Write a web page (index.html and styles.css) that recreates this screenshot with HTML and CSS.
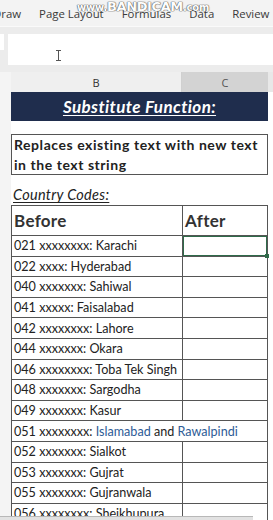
FILE: index.html
```html
<!DOCTYPE html>
<html>
<head>
<meta charset="utf-8">
<link rel="stylesheet" href="styles.css">
</head>
<body>
<div class="ribbon">
  <span class="tab tab-first">Draw</span>
  <span class="tab">Page Layout</span>
  <span class="tab">Formulas</span>
  <span class="tab">Data</span>
  <span class="tab">Review</span>
  <div class="watermark"><span class="wm-small">www.</span>BANDICAM<span class="wm-small">.com</span></div>
</div>
<div class="fbar">
  <div class="namebox"></div>
  <div class="finput">
    <svg class="ibeam" width="7" height="11" viewBox="0 0 7 11"><path d="M1 0.5h5M1 10.5h5M3.5 0.5v10" stroke="#555" stroke-width="1" fill="none"/></svg>
  </div>
</div>
<div class="sheet">
  <div class="rowhead"></div>
  <div class="main">
    <div class="colheads">
      <div class="colhead colB">B</div>
      <div class="colhead colC">C</div>
    </div>
    <div class="title"><span>Substitute Function:</span></div>
    <div class="desc">Replaces existing text with new text<br>in the text string</div>
    <div class="subhead"><span>Country Codes:</span></div>
    <div class="table">
      <div class="row head"><div class="cb">Before</div><div class="cc">After</div></div>
      <div class="row"><div class="cb">021 xxxxxxxx: Karachi</div><div class="cc sel"><span class="handle"></span></div></div>
      <div class="row"><div class="cb">022 xxxx: Hyderabad</div><div class="cc"></div></div>
      <div class="row"><div class="cb">040 xxxxxxx: Sahiwal</div><div class="cc"></div></div>
      <div class="row"><div class="cb">041 xxxxx: Faisalabad</div><div class="cc"></div></div>
      <div class="row"><div class="cb">042 xxxxxxxx: Lahore</div><div class="cc"></div></div>
      <div class="row"><div class="cb">044 xxxxxxx: Okara</div><div class="cc"></div></div>
      <div class="row"><div class="cb">046 xxxxxxxx: Toba Tek Singh</div><div class="cc"></div></div>
      <div class="row"><div class="cb">048 xxxxxxx: Sargodha</div><div class="cc"></div></div>
      <div class="row"><div class="cb">049 xxxxxxx: Kasur</div><div class="cc"></div></div>
      <div class="row span"><div class="cfull">051 xxxxxxxx: <span class="blue">Islamabad</span> and <span class="blue">Rawalpindi</span></div></div>
      <div class="row"><div class="cb">052 xxxxxxx: Sialkot</div><div class="cc"></div></div>
      <div class="row"><div class="cb">053 xxxxxxx: Gujrat</div><div class="cc"></div></div>
      <div class="row"><div class="cb">055 xxxxxxx: Gujranwala</div><div class="cc"></div></div>
      <div class="row"><div class="cb">056 xxxxxxxx: Sheikhupura</div><div class="cc"></div></div>
    </div>
  </div>
  <div class="rightpad"></div>
</div>
<div class="scrollbar"></div>
</body>
</html>
```
FILE: styles.css
```css
* { box-sizing: border-box; }
html, body { margin: 0; padding: 0; }
body {
  width: 273px;
  height: 520px;
  overflow: hidden;
  background: #ffffff;
  font-family: "Lato", "Open Sans", sans-serif;
  position: relative;
}
.ribbon {
  height: 27px;
  background: #f3f3f3;
  display: flex;
  align-items: center;
  gap: 18px;
  font-family: "Open Sans", "Noto Sans", sans-serif;
  font-size: 11.4px;
  color: #3a3a3a;
  white-space: nowrap;
  position: relative;
  border-bottom: 1px solid #fafafa;
}
.tab-first { margin-left: -7px; }
.watermark {
  position: absolute;
  left: 77px;
  top: 0px;
  font-family: "DejaVu Sans", sans-serif;
  font-weight: bold;
  font-size: 13px;
  line-height: 14px;
  letter-spacing: -0.4px;
  color: #ffffff;
  text-shadow: 0 0 1px #444, 0 0 1px #444, 0 0 1px #444;
  opacity: 0.9;
}
.wm-small { font-size: 10px; letter-spacing: -0.2px; }
.fbar {
  height: 45px;
  background: #ececec;
  display: flex;
  padding-top: 7px;
  gap: 4px;
}
.namebox {
  width: 4px;
  height: 16px;
  background: #ffffff;
}
.finput {
  flex: 1;
  height: 31px;
  background: #ffffff;
  display: flex;
  align-items: flex-end;
  padding: 0 0 4px 47px;
}
.sheet {
  display: flex;
  background: #ffffff;
}
.rowhead {
  width: 11px;
  background: #f4f4f4;
}
.main { width: 257px; }
.rightpad { flex: 1; background: linear-gradient(#e8e8e8 0 20px, #ffffff 20px); }
.colheads {
  display: flex;
  height: 20px;
  font-family: "Open Sans", sans-serif;
  font-size: 11px;
  color: #333;
}
.colhead {
  display: flex;
  align-items: center;
  justify-content: center;
}
.colB { width: 171px; background: #efefef; border-right: 1px solid #d0d0d0; }
.colC { flex: 1; background: #d3d3d3; color: #555; }
.title {
  height: 29px;
  background: #1f2d4d;
  color: #ffffff;
  font-weight: bold;
  font-style: italic;
  font-size: 17px;
  letter-spacing: 0.4px;
  display: flex;
  align-items: center;
  justify-content: center;
}
.title span { text-decoration: underline; text-underline-offset: 2px; text-decoration-thickness: 1px; }
.desc {
  margin-top: 13px;
  height: 41px;
  border: 1px solid #555;
  font-weight: bold;
  font-size: 14px;
  letter-spacing: 0.55px;
  line-height: 20px;
  padding: 0 0 0 2px;
  color: #222;
  white-space: nowrap;
}
.subhead {
  height: 30px;
  padding: 12px 0 0 2px;
  font-style: italic;
  font-size: 14.5px;
  letter-spacing: 0.3px;
  line-height: 16px;
  color: #222;
}
.subhead span { text-decoration: underline; text-underline-offset: 2px; text-decoration-thickness: 1px; }
.table {
  border-top: 1px solid #555;
  border-left: 1px solid #555;
  border-right: 1px solid #555;
}
.row {
  display: flex;
  height: 20.6px;
  border-bottom: 1px solid #555;
  font-size: 12.6px;
  color: #222;
}
.row.head { height: 30px; font-size: 17px; font-weight: bold; letter-spacing: 0.3px; color: #333; }
.cb {
  width: 171px;
  border-right: 1px solid #555;
  padding-left: 2px;
  display: flex;
  align-items: center;
  white-space: nowrap;
}
.cc {
  flex: 1;
  padding-left: 2px;
  display: flex;
  align-items: center;
  position: relative;
}
.cfull {
  padding-left: 2px;
  display: flex;
  align-items: center;
  white-space: pre;
}
.blue { color: #2d5b96; }
.sel { outline: 1.5px solid #2f6b4a; outline-offset: -1px; }
.handle {
  position: absolute;
  right: -2px;
  bottom: -2px;
  width: 4px;
  height: 4px;
  background: #2f6b4a;
}
.scrollbar {
  position: absolute;
  left: 0;
  bottom: 0;
  width: 253px;
  height: 4px;
  background: #e2e2e2;
  border-top: 1px solid #b8b8b8;
}
```
